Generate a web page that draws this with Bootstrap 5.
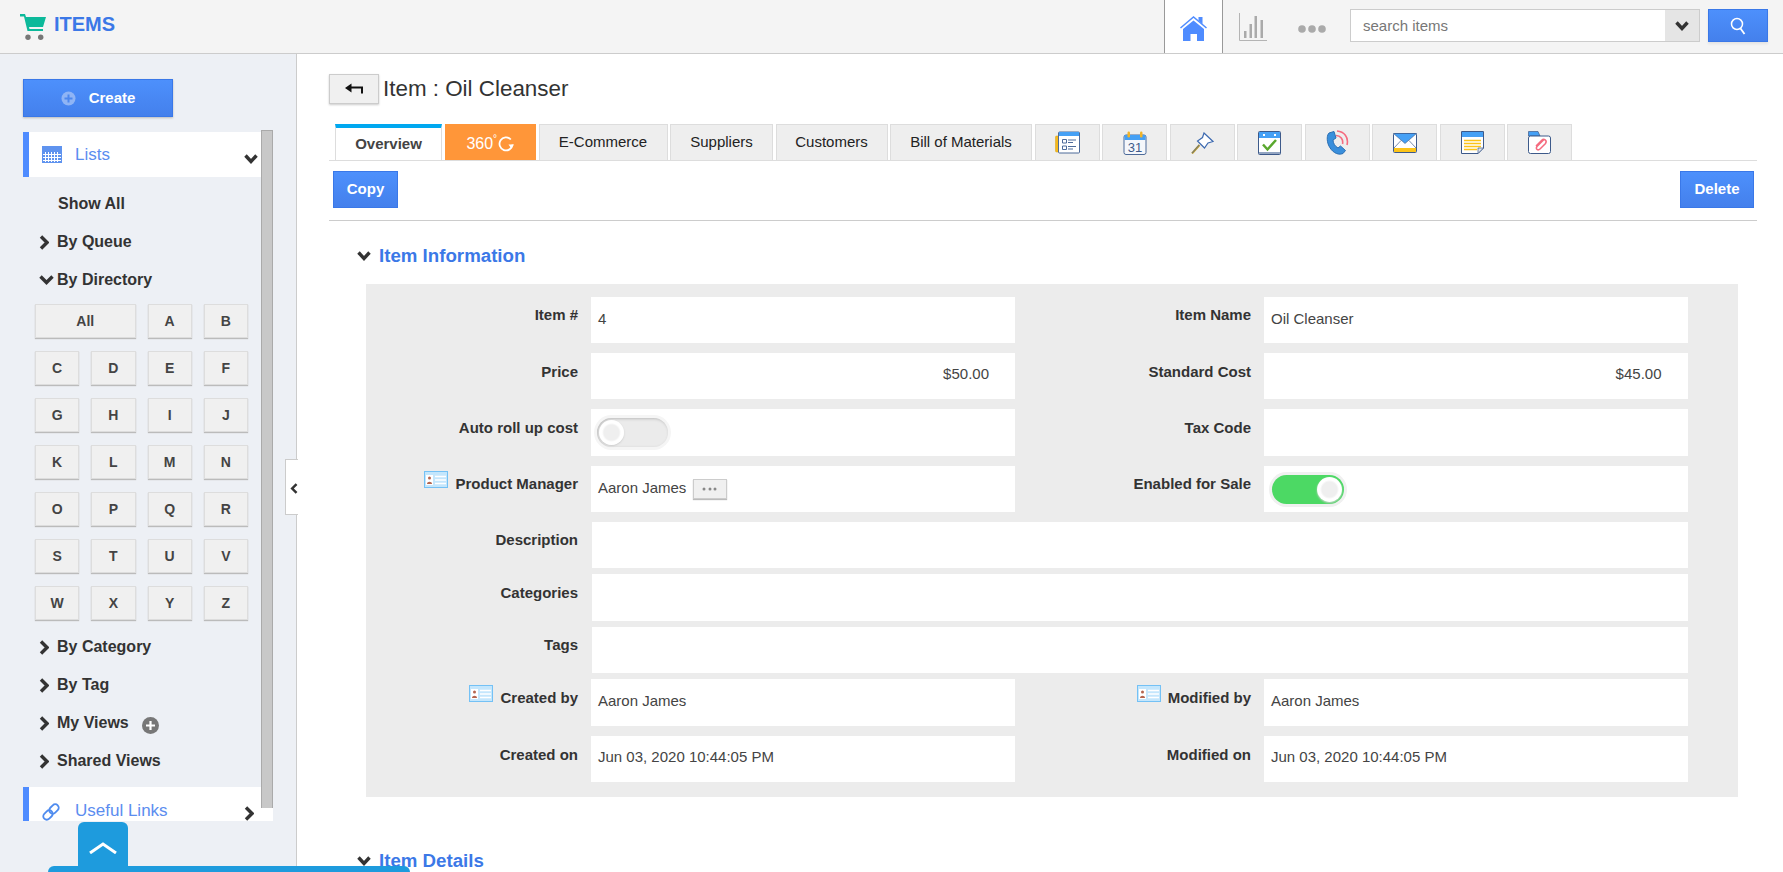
<!DOCTYPE html>
<html lang="en">
<head>
<meta charset="utf-8">
<title>Items</title>
<link href="https://cdn.jsdelivr.net/npm/bootstrap@5.3.0/dist/css/bootstrap.min.css" rel="stylesheet">
<style>
html,body{height:872px;overflow:hidden}
body{font-family:"Liberation Sans",Arial,sans-serif;color:#333;background:#fff;position:relative;font-size:15px}
.topbar{height:54px;background:#f4f4f4;border-bottom:1px solid #ccc;padding-right:15px}
.brand-ico{margin-left:20px;display:block}
.brand-txt{font-size:20px;font-weight:700;color:#3b78e7;margin-left:8px;line-height:23px;margin-top:-5px}
.home-cell{width:59px;height:53px;background:#fff;border-left:1px solid #999;border-right:1px solid #999;margin-right:16px}
.chart-ico{margin-right:31px}
.dots-ico{margin-right:24px}
.search-grp{width:350px;margin-top:-2px}
.search-grp .form-control{height:33px;border-radius:0;border:1px solid #ccc;font-size:15px;padding:0 12px;box-shadow:none}
.search-grp .form-control::placeholder{color:#777;opacity:1}
.drop-btn{width:35px;height:33px;background:#e5e5e5;border:1px solid #ccc;border-left:0;border-radius:0;padding:0}
.blue-btn{background:linear-gradient(#4d90fc,#4480ec);border:1px solid #3a78e8;border-radius:0;color:#fff;font-weight:700;font-size:15px;padding:0}
.blue-btn:hover{color:#fff;background:#4480ec;border-color:#3a78e8}
.find-btn{width:60px;height:33px;margin:-2px 0 0 8px;box-shadow:0 2px 2px #e3e3e3}
.page-wrap{height:818px}
.side-col{width:297px;flex:none;background:#edf0f5;border-right:1px solid #ccc;padding:25px 0 0 23px}
.make-btn{width:150px;height:38px;box-shadow:0 1px 2px #bbb}
.make-btn span{margin-left:13px}
.scroll-box{width:250px;height:691px;margin-top:13px;overflow:hidden}
.scroll-inner{width:238px;flex:none;padding-top:2px}
.scroll-track{width:12px;flex:none;background:#fff}
.scroll-thumb{height:678px;background:#c8c8c8;border:1px solid #aaa;border-width:1px 1px 0 1px}
.acc-head{height:45px;background:#fff;border-left:6px solid #4f8cff;color:#5b8def;font-size:17px;padding-right:3px}
.acc-ico{margin-left:13px;width:33px;flex:none}
.acc-chev{margin-top:8px}
.nav-rows{padding-top:8px}
.nav-line{height:38px;font-size:16px;font-weight:700;color:#333;padding-left:16px}
.nav-line .slot{width:18px;flex:none}
.nav-line.plain{padding-left:35px}
.az-grid{display:grid;grid-template-columns:repeat(4,44.25px);grid-auto-rows:34px;column-gap:12px;row-gap:13px;margin:5px 0 8px 12px}
.az-key{background:#f0f0f0;border:1px solid #ddd;box-shadow:0 1px 1px #bbb;font-size:14px;font-weight:700;color:#444;border-radius:0;padding:0;display:flex;align-items:center;justify-content:center}
.az-wide{grid-column:span 2}
.plus-dot{width:17px;height:17px;background:#777;border-radius:50%;margin-left:13px;margin-top:5px;color:#fff;flex:none}
.useful{margin-top:7px}
.useful-txt{margin-top:3px}
.main-col{padding:20px 26px 0 32px;overflow:hidden;min-width:0}
.back-btn{width:50px;height:30px;background:#f0f0f0;border:1px solid #ccc;border-radius:0;box-shadow:0 1px 2px #ccc;padding:0}
.page-title{font-size:22.4px;font-weight:400;color:#333;margin:0 0 0 4px;line-height:30px}
.tab-row{margin-top:20px;padding-left:6px;border-bottom:1px solid #ddd;height:37px;gap:2.5px;flex-wrap:nowrap}
.tab-row .nav-link{height:36px;padding:0;border:1px solid #ddd;border-bottom:0;border-radius:0;background:#eee;color:#222;font-size:15px;display:flex;align-items:center;justify-content:center}
.tab-row .tab-on{width:107px;background:#fff;border-top:4px solid #00a8f0;font-weight:700;color:#444}
.tab-row .tab-hot{background:#ff9639;border-color:#ff9639;color:#fff;width:91.5px;gap:1px;font-size:16px;padding-top:3px}
.tab-row .tab-ico{width:65px}
.tab-row .w-ec{width:129px}
.tab-row .w-su{width:103px}
.tab-row .w-cu{width:112px}
.tab-row .w-bi{width:142px}
.tab-deg{font-size:10px;position:relative;top:-6px;margin-left:-1px}
.act-row{padding:10px 3px 12px 4px;border-bottom:1px solid #ccc}
.act-copy{width:65px;height:37px}
.act-del{width:74px;height:37px}
.sec-head{height:28px;font-size:18.7px;font-weight:700;color:#3b78e7;padding-left:28px;margin-top:21px}
.sec-head svg{margin-right:8px}
.sec-head.no-top{margin-top:0}
.form-panel{background:#ececec;margin:14px 0 50px 37px;width:1371.5px;padding:13px 0 15px}
.frow{display:grid;grid-template-columns:225px 424px 249px 423.5px;height:46px;margin-bottom:10px}
.frow.tall{height:47px}
.frow.snug{margin-bottom:6px}
.frow.last{margin-bottom:0}
.flabel{font-size:15px;font-weight:700;color:#333;text-align:right;padding:9px 13px 0 0;line-height:20px;display:flex;justify-content:flex-end;align-items:flex-start}
.flabel.hi{padding-top:8px}
.flabel svg{margin-right:7px;margin-top:-3px;flex:none}
.fval{background:#fff;padding:11px 7px 0;line-height:20px;font-size:15px;color:#444}
.fval.lo{padding-top:12px}
.fval.num{text-align:right;padding-right:26px}
.fval.wide{grid-column:span 3;margin-left:1px}
.fval.sw{padding:0 0 0 6px;display:flex;align-items:center}
.fval.sw2{padding-left:8px}
.fval.inl{padding:0 7px 3px;display:flex;align-items:center}
.mini-btn{display:flex;width:34px;height:20px;background:#f0f0f0;border:1px solid #ccc;box-shadow:0 1px 1px #bbb;margin:3px 0 0 7px;align-items:center;justify-content:center;border-radius:0;padding:0}
.toggler{width:71px;height:29px;border-radius:15px;background:#ebebeb;box-shadow:0 0 0 3px #f5f5f5,inset 1px 1px 3px #bbb;position:relative;display:block}
.toggler::after{content:"";position:absolute;left:2px;top:2px;width:25px;height:25px;border-radius:50%;background:radial-gradient(closest-side,#efefef 60%,#fff 76%);box-shadow:0 1px 2px #ccc}
.toggler.on{width:72px;background:#4cd964;box-shadow:0 0 0 3px #f0f0f0}
.toggler.on::after{left:auto;right:2px}
.pull-tab{position:absolute;left:285px;top:459px;width:13px;height:56px;background:#fff;border:1px solid #ccc;border-right:0;display:flex;align-items:center;padding:2px 0 0 4px}
.dock{position:absolute;left:48px;top:866px;width:362px;height:6px;background:#1e9bdd;border-radius:6px 6px 0 0}
.dock-tab{position:absolute;left:78px;top:822px;width:50px;height:45px;background:#1e9bdd;border-radius:6px 6px 0 0;display:flex;justify-content:center;padding-top:20px}
</style>
</head>
<body>
<header class="topbar d-flex align-items-center">
  <svg class="brand-ico" width="26" height="26" viewBox="0 0 26 26"><path fill="#0cb99a" d="M0 0H5L6 3H26L23 13H9L9.5 15H23V17H7.5L4 2.5H0Z"/><circle cx="8" cy="23.2" r="2.7" fill="#777"/><circle cx="20.7" cy="23.2" r="2.7" fill="#777"/></svg>
  <div class="brand-txt">ITEMS</div>
  <div class="home-cell ms-auto d-flex align-items-center justify-content-center">
    <svg width="27" height="25" viewBox="0 0 27 25" class="mt-1"><path fill="#4f8cff" d="M18.5 1h4v7l-4-3.4zM3 13 13.5 4.5 24 13V25H17V18H10.5V25H3Z"/><path fill="none" stroke="#4f8cff" stroke-width="1.5" d="M.5 12 13.5 1 26.5 12"/></svg>
  </div>
  <svg class="chart-ico" width="28" height="28" viewBox="0 0 28 28"><path fill="none" stroke="#b4b4b4" stroke-width="1" d="M.5 0V27.5H28"/><path fill="#aaa" d="M5 18h2.500v7H5zM10.500 11H13v14h-2.500zM15.500 3H18V25h-2.500zM21.500 7H24V25h-2.500z"/></svg>
  <svg class="dots-ico mt-1" width="28" height="8" viewBox="0 0 28 8"><circle cx="4" cy="4" r="3.800" fill="#aaa"/><circle cx="14" cy="4" r="3.800" fill="#aaa"/><circle cx="24" cy="4" r="3.800" fill="#aaa"/></svg>
  <div class="input-group search-grp flex-nowrap">
    <input class="form-control" type="text" placeholder="search items" aria-label="search items">
    <button class="btn drop-btn d-flex align-items-center justify-content-center" type="button" aria-label="Show options"><svg width="14" height="10" viewBox="0 0 14 10"><path fill="none" stroke="#333" stroke-width="3.400" d="M1.500 1.500 7 7.500 12.500 1.500"/></svg></button>
  </div>
  <button class="btn blue-btn find-btn d-flex align-items-center justify-content-center" type="button" aria-label="Search"><svg width="16" height="18" viewBox="0 0 16 18"><circle cx="7" cy="7" r="5.500" fill="none" stroke="#fff" stroke-width="1.500"/><path stroke="#fff" stroke-width="1.800" d="M10.500 11.500 14.500 17"/></svg></button>
</header>

<div class="page-wrap d-flex">
  <aside class="side-col">
    <button class="btn blue-btn make-btn d-flex align-items-center justify-content-center" type="button">
      <svg width="15" height="15" viewBox="0 0 15 15"><circle cx="7.500" cy="7.500" r="7" fill="#8fb4f5"/><path stroke="#4d87ee" stroke-width="2" d="M7.500 3.500v8M3.500 7.500h8"/></svg><span>Create</span>
    </button>
    <div class="scroll-box d-flex">
      <div class="scroll-inner">
        <div class="acc-head d-flex align-items-center">
          <span class="acc-ico d-flex"><svg width="20" height="17" viewBox="0 0 20 17"><rect width="20" height="17" fill="#5f93ef"/><path stroke="#fff" stroke-width="1" d="M3.500 6v10M6.500 6v10M9.500 6v10M12.500 6v10M15.500 6v10M1 8.500h18M1 11.500h18M1 14.500h18"/></svg></span>
          <span>Lists</span>
          <svg class="acc-chev ms-auto" width="14" height="10" viewBox="0 0 14 10"><path fill="none" stroke="#333" stroke-width="3.400" d="M1.500 1.500 7 7.500 12.500 1.500"/></svg>
        </div>
        <div class="nav-rows">
          <div class="nav-line plain d-flex align-items-center">Show All</div>
          <div class="nav-line d-flex align-items-center"><span class="slot d-flex"><svg width="10" height="15" viewBox="0 0 10 15"><path fill="none" stroke="#333" stroke-width="3.400" d="M2 1.500 8 7.500 2 13.500"/></svg></span>By Queue</div>
          <div class="nav-line d-flex align-items-center"><span class="slot d-flex"><svg width="15" height="10" viewBox="0 0 15 10"><path fill="none" stroke="#333" stroke-width="3.400" d="M1.500 1.500 7.500 7.500 13.500 1.500"/></svg></span>By Directory</div>
          <div class="az-grid">
            <button class="az-key az-wide" type="button">All</button>
            <button class="az-key" type="button">A</button><button class="az-key" type="button">B</button>
            <button class="az-key" type="button">C</button><button class="az-key" type="button">D</button><button class="az-key" type="button">E</button><button class="az-key" type="button">F</button>
            <button class="az-key" type="button">G</button><button class="az-key" type="button">H</button><button class="az-key" type="button">I</button><button class="az-key" type="button">J</button>
            <button class="az-key" type="button">K</button><button class="az-key" type="button">L</button><button class="az-key" type="button">M</button><button class="az-key" type="button">N</button>
            <button class="az-key" type="button">O</button><button class="az-key" type="button">P</button><button class="az-key" type="button">Q</button><button class="az-key" type="button">R</button>
            <button class="az-key" type="button">S</button><button class="az-key" type="button">T</button><button class="az-key" type="button">U</button><button class="az-key" type="button">V</button>
            <button class="az-key" type="button">W</button><button class="az-key" type="button">X</button><button class="az-key" type="button">Y</button><button class="az-key" type="button">Z</button>
          </div>
          <div class="nav-line d-flex align-items-center"><span class="slot d-flex"><svg width="10" height="15" viewBox="0 0 10 15"><path fill="none" stroke="#333" stroke-width="3.400" d="M2 1.500 8 7.500 2 13.500"/></svg></span>By Category</div>
          <div class="nav-line d-flex align-items-center"><span class="slot d-flex"><svg width="10" height="15" viewBox="0 0 10 15"><path fill="none" stroke="#333" stroke-width="3.400" d="M2 1.500 8 7.500 2 13.500"/></svg></span>By Tag</div>
          <div class="nav-line d-flex align-items-center"><span class="slot d-flex"><svg width="10" height="15" viewBox="0 0 10 15"><path fill="none" stroke="#333" stroke-width="3.400" d="M2 1.500 8 7.500 2 13.500"/></svg></span>My Views<span class="plus-dot d-flex align-items-center justify-content-center"><svg width="11" height="11" viewBox="0 0 11 11"><path stroke="#fff" stroke-width="2.200" d="M5.500 1v9M1 5.500h9"/></svg></span></div>
          <div class="nav-line d-flex align-items-center"><span class="slot d-flex"><svg width="10" height="15" viewBox="0 0 10 15"><path fill="none" stroke="#333" stroke-width="3.400" d="M2 1.500 8 7.500 2 13.500"/></svg></span>Shared Views</div>
        </div>
        <div class="acc-head useful d-flex align-items-center">
          <span class="acc-ico d-flex"><svg width="18" height="18" viewBox="0 0 18 18" class="mt-1"><g fill="none" stroke="#4f8cef" stroke-width="1.800" transform="rotate(-45 9 9)"><rect x="-.5" y="5.500" width="10.500" height="7" rx="3.500"/><rect x="8" y="5.500" width="10.500" height="7" rx="3.500"/></g></svg></span>
          <span class="useful-txt">Useful Links</span>
          <svg class="acc-chev ms-auto me-1" width="10" height="15" viewBox="0 0 10 15"><path fill="none" stroke="#333" stroke-width="3.400" d="M2 1.500 8 7.500 2 13.500"/></svg>
        </div>
      </div>
      <div class="scroll-track"><div class="scroll-thumb"></div></div>
    </div>
  </aside>

  <main class="main-col flex-grow-1">
    <div class="d-flex align-items-center">
      <button class="btn back-btn d-flex align-items-center justify-content-center" type="button" aria-label="Back"><svg width="18" height="12" viewBox="0 0 18 12"><path d="M0 5 6.500 .5V9.500Z" fill="#111"/><path fill="none" stroke="#111" stroke-width="2" d="M5 4.500H17V10.500"/></svg></button>
      <h1 class="page-title">Item : Oil Cleanser</h1>
    </div>
    <ul class="nav tab-row">
      <li class="nav-item"><a class="nav-link tab-on" href="#">Overview</a></li>
      <li class="nav-item"><a class="nav-link tab-hot" href="#">360<span class="tab-deg">°</span><svg width="16" height="16" viewBox="0 0 16 16"><path fill="none" stroke="#fff" stroke-width="1.800" d="M12.800 3.500A6.500 6.500 0 1 0 14.500 8.500"/><path fill="#fff" d="M10.500 8.500H16L13.300 12.500Z"/></svg></a></li>
      <li class="nav-item"><a class="nav-link w-ec" href="#">E-Commerce</a></li>
      <li class="nav-item"><a class="nav-link w-su" href="#">Suppliers</a></li>
      <li class="nav-item"><a class="nav-link w-cu" href="#">Customers</a></li>
      <li class="nav-item"><a class="nav-link w-bi" href="#">Bill of Materials</a></li>
      <li class="nav-item"><a class="nav-link tab-ico" href="#" aria-label="Activities"><svg width="25" height="23" viewBox="0 0 25 23"><rect x=".5" y="5" width="4" height="16" rx="1" fill="#f5b91e" stroke="#d9a010" stroke-width=".5"/><rect x="3.500" y="1" width="21" height="21" rx="1" fill="#fff" stroke="#4d6a99"/><rect x="4" y="1" width="20" height="4" fill="#45a0f5"/><path fill="none" stroke="#4d6a99" d="M7.500 8.500h4v3.500h-4zM7.500 15h4v3.500h-4zM13 9h8M13 11.500h5M13 15.500h8M13 18h5"/></svg></a></li>
      <li class="nav-item"><a class="nav-link tab-ico" href="#" aria-label="Calendar"><svg width="24" height="24" viewBox="0 0 24 24"><rect x="1" y="4" width="22" height="19.500" rx="2" fill="#f5f7fb" stroke="#4d6a99"/><rect x="1.500" y="4" width="21" height="5" fill="#45a0f5"/><rect x="4.500" y=".5" width="2.500" height="6" rx="1.200" fill="#f0b42a"/><rect x="17" y=".5" width="2.500" height="6" rx="1.200" fill="#f0b42a"/><text x="12" y="21" text-anchor="middle" font-family="Liberation Sans" font-size="13" fill="#3d5a8a">31</text></svg></a></li>
      <li class="nav-item"><a class="nav-link tab-ico" href="#" aria-label="Pins"><svg width="23" height="22" viewBox="0 0 23 22"><path stroke="#b4952f" stroke-width="2" d="M1 21.500 8.500 13"/><path stroke="#4d6a99" stroke-width=".7" d="M1 21 8 13"/><path fill="#fff" stroke="#3d6ab0" stroke-width="1.200" d="M13 1 22 9.500 17 11 13.500 16 6.500 9 11.500 5.500Z"/></svg></a></li>
      <li class="nav-item"><a class="nav-link tab-ico" href="#" aria-label="Tasks"><svg width="23" height="24" viewBox="0 0 23 24"><rect x=".5" y=".5" width="22" height="23" rx="1" fill="#fff" stroke="#3d5a8a"/><rect x="1" y="1" width="21" height="6" fill="#45a0f5"/><rect x="5" y="3" width="2" height="2" fill="#fff"/><rect x="16" y="3" width="2" height="2" fill="#fff"/><rect x="1" y="21" width="21" height="2" fill="#93a5c2"/><path fill="none" stroke="#5aa82e" stroke-width="2.500" d="M5 13.500 9.500 18.500 18 9"/></svg></a></li>
      <li class="nav-item"><a class="nav-link tab-ico" href="#" aria-label="Calls"><svg width="24" height="25" viewBox="0 0 24 25"><path fill="#3a8fdc" stroke="#2c6fb3" d="M4 3 9 1.500 11 8 8 10C8 13 10 16.500 13 18L15.500 16 20.500 20.500 18 23.500C12 26 6 21 3.500 15 1.500 10 2 5 4 3Z"/><path fill="none" stroke="#f56b7f" stroke-width="1.600" d="M12 1C19 1.500 24 7 22 15M11 5.500C15.500 5.500 18.500 9.500 17.500 14"/></svg></a></li>
      <li class="nav-item"><a class="nav-link tab-ico" href="#" aria-label="Emails"><svg width="24" height="20" viewBox="0 0 24 20"><rect x=".5" y=".5" width="23" height="19" rx="1" fill="#fff" stroke="#3d5a8a"/><rect x="1" y="15" width="22" height="4" fill="#fcc419"/><path fill="#45a0f5" stroke="#3d5a8a" stroke-width=".6" d="M.5.5H23.500L12 10.500Z"/><path fill="none" stroke="#3d5a8a" stroke-width=".7" d="M1 15 8 7.500M23 15 16 7.500"/></svg></a></li>
      <li class="nav-item"><a class="nav-link tab-ico" href="#" aria-label="Notes"><svg width="23" height="23" viewBox="0 0 23 23"><path fill="#fff" stroke="#3d5a8a" d="M.5.5H22.500V17L17 22.500H.5Z"/><rect x="1" y="1" width="21" height="5" fill="#45a0f5"/><path stroke="#fcc419" stroke-width="1.500" d="M3 9.500H20M3 12.500H20M3 15.500H20M3 18.500H16"/><path fill="#dfe4ec" stroke="#3d5a8a" stroke-width=".7" d="M17 22.500V17H22.500Z"/></svg></a></li>
      <li class="nav-item"><a class="nav-link tab-ico" href="#" aria-label="Attachments"><svg width="23" height="23" viewBox="0 0 23 23"><path fill="#45a0f5" stroke="#3d5a8a" stroke-width=".7" d="M.5 5V.5H10L12 5Z"/><rect x=".5" y="5" width="22" height="17.500" rx="2" fill="#fff" stroke="#3d5a8a"/><path fill="none" stroke="#f56b7f" stroke-width="1.500" d="M15.500 9 9 15.500C7 18 10 20 12 18L17.500 12.500C19.500 9.500 16 7 13.500 9.500L8 15"/></svg></a></li>
    </ul>
    <div class="act-row d-flex justify-content-between">
      <button class="btn blue-btn act-copy" type="button">Copy</button>
      <button class="btn blue-btn act-del" type="button">Delete</button>
    </div>
    <div class="sec-head d-flex align-items-center"><svg width="14" height="10" viewBox="0 0 14 10"><path fill="none" stroke="#333" stroke-width="3.400" d="M1.500 1.500 7 7.500 12.500 1.500"/></svg>Item Information</div>
    <div class="form-panel">
      <div class="frow"><div class="flabel hi">Item #</div><div class="fval lo">4</div><div class="flabel hi">Item Name</div><div class="fval lo">Oil Cleanser</div></div>
      <div class="frow"><div class="flabel">Price</div><div class="fval num">$50.00</div><div class="flabel">Standard Cost</div><div class="fval num">$45.00</div></div>
      <div class="frow tall"><div class="flabel">Auto roll up cost</div><div class="fval sw"><span class="toggler"></span></div><div class="flabel">Tax Code</div><div class="fval"></div></div>
      <div class="frow"><div class="flabel hi"><svg width="24" height="17" viewBox="0 0 24 17"><rect x=".5" y=".5" width="23" height="16" fill="#c4e6fc" stroke="#74c1f5"/><rect x="2" y="4" width="7" height="10" fill="#fff"/><circle cx="5.500" cy="7" r="1.500" fill="#b5654f"/><path fill="#b5654f" d="M3 13c0-3 5-3 5 0z"/><path stroke="#fff" stroke-width="1.500" d="M11 5.500h11M11 9h11M11 12.500h11"/></svg>Product Manager</div><div class="fval inl">Aaron James<button class="mini-btn" type="button" aria-label="More"><svg width="16" height="4" viewBox="0 0 16 4"><circle cx="2" cy="2" r="1.500" fill="#888"/><circle cx="8" cy="2" r="1.500" fill="#888"/><circle cx="13" cy="2" r="1.500" fill="#888"/></svg></button></div><div class="flabel hi">Enabled for Sale</div><div class="fval sw sw2"><span class="toggler on"></span></div></div>
      <div class="frow snug"><div class="flabel hi">Description</div><div class="fval wide"></div></div>
      <div class="frow tall snug"><div class="flabel">Categories</div><div class="fval wide"></div></div>
      <div class="frow snug"><div class="flabel hi">Tags</div><div class="fval wide"></div></div>
      <div class="frow tall"><div class="flabel"><svg width="24" height="17" viewBox="0 0 24 17"><rect x=".5" y=".5" width="23" height="16" fill="#c4e6fc" stroke="#74c1f5"/><rect x="2" y="4" width="7" height="10" fill="#fff"/><circle cx="5.500" cy="7" r="1.500" fill="#b5654f"/><path fill="#b5654f" d="M3 13c0-3 5-3 5 0z"/><path stroke="#fff" stroke-width="1.500" d="M11 5.500h11M11 9h11M11 12.500h11"/></svg>Created by</div><div class="fval lo">Aaron James</div><div class="flabel"><svg width="24" height="17" viewBox="0 0 24 17"><rect x=".5" y=".5" width="23" height="16" fill="#c4e6fc" stroke="#74c1f5"/><rect x="2" y="4" width="7" height="10" fill="#fff"/><circle cx="5.500" cy="7" r="1.500" fill="#b5654f"/><path fill="#b5654f" d="M3 13c0-3 5-3 5 0z"/><path stroke="#fff" stroke-width="1.500" d="M11 5.500h11M11 9h11M11 12.500h11"/></svg>Modified by</div><div class="fval lo">Aaron James</div></div>
      <div class="frow last"><div class="flabel">Created on</div><div class="fval">Jun 03, 2020 10:44:05 PM</div><div class="flabel">Modified on</div><div class="fval">Jun 03, 2020 10:44:05 PM</div></div>
    </div>
    <div class="sec-head no-top d-flex align-items-center"><svg width="14" height="10" viewBox="0 0 14 10"><path fill="none" stroke="#333" stroke-width="3.400" d="M1.500 1.500 7 7.500 12.500 1.500"/></svg>Item Details</div>
  </main>
</div>

<div class="pull-tab"><svg width="11" height="15" viewBox="0 0 11 15"><path fill="none" stroke="#333" stroke-width="3.400" d="M9 1.500 3 7.500 9 13.500"/></svg></div>
<div class="dock-tab"><svg width="28" height="12" viewBox="0 0 28 12"><path fill="none" stroke="#fff" stroke-width="3" d="M1 11 14 2 27 11"/></svg></div>
<div class="dock"></div>
<script src="https://cdn.jsdelivr.net/npm/bootstrap@5.3.0/dist/js/bootstrap.bundle.min.js"></script>
</body>
</html>
